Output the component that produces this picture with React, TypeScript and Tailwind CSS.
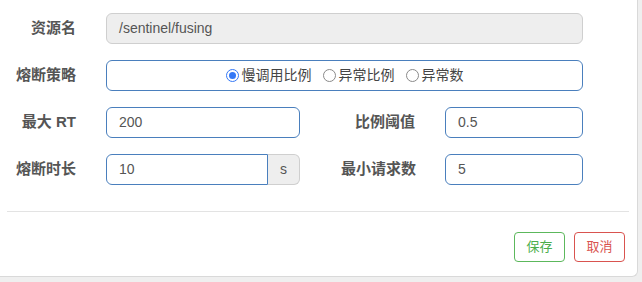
import React from "react"

const font = { fontFamily: '"Liberation Sans", "Noto Sans CJK SC", sans-serif' }

function Label({ children, className = "" }: { children: React.ReactNode; className?: string }) {
    return (
        <label className={`text-right text-[15px] font-bold text-[#555] ${className}`}>{children}</label>
    )
}

function Radio({ checked, label }: { checked?: boolean; label: string }) {
    return (
        <span className="flex items-center gap-[3px]">
            {checked ? (
                <span className="flex h-[13px] w-[13px] items-center justify-center rounded-full border border-[#3478f6] bg-white">
                    <span className="h-[7px] w-[7px] rounded-full bg-[#3478f6]" />
                </span>
            ) : (
                <span className="h-[13px] w-[13px] rounded-full border border-[#8a8a8a] bg-white" />
            )}
            <span className="text-[14px] text-[#444]">{label}</span>
        </span>
    )
}

export default function App() {
    return (
        <div className="h-[282px] w-[642px] bg-[#efefef]" style={font}>
            <div className="h-[277px] w-[638px] rounded-br-[6px] border-r border-b border-[#d9d9d9] bg-white">
                <div className="flex flex-col gap-[16px] pt-[13px]">
                    <div className="flex items-center">
                        <Label className="w-[76px]">资源名</Label>
                        <div className="ml-[30px] flex h-[31px] w-[477px] items-center rounded-[6px] border border-[#cfcfcf] bg-[#eeeeee] px-[12px] text-[14px] text-[#555]">
                            /sentinel/fusing
                        </div>
                    </div>
                    <div className="flex items-center">
                        <Label className="w-[76px]">熔断策略</Label>
                        <div className="ml-[30px] flex h-[31px] w-[477px] items-center justify-center gap-[11px] rounded-[6px] border border-[#4a7fbd] bg-white">
                            <Radio checked label="慢调用比例" />
                            <Radio label="异常比例" />
                            <Radio label="异常数" />
                        </div>
                    </div>
                    <div className="flex items-center">
                        <Label className="w-[76px]">最大 RT</Label>
                        <div className="ml-[30px] flex h-[31px] w-[194px] items-center rounded-[6px] border border-[#4a7fbd] px-[12px] text-[14px] text-[#555]">
                            200
                        </div>
                        <Label className="w-[115px]">比例阈值</Label>
                        <div className="ml-[30px] flex h-[31px] w-[138px] items-center rounded-[6px] border border-[#4a7fbd] px-[12px] text-[14px] text-[#555]">
                            0.5
                        </div>
                    </div>
                    <div className="flex items-center">
                        <Label className="w-[76px]">熔断时长</Label>
                        <div className="ml-[30px] flex h-[31px] w-[194px]">
                            <div className="flex flex-1 items-center rounded-l-[6px] border border-[#4a7fbd] px-[12px] text-[14px] text-[#555]">
                                10
                            </div>
                            <div className="flex w-[32px] items-center justify-center rounded-r-[6px] border border-l-0 border-[#cfcfcf] bg-[#eeeeee] text-[14px] text-[#555]">
                                s
                            </div>
                        </div>
                        <Label className="w-[116px]">最小请求数</Label>
                        <div className="ml-[29px] flex h-[31px] w-[138px] items-center rounded-[6px] border border-[#4a7fbd] px-[12px] text-[14px] text-[#555]">
                            5
                        </div>
                    </div>
                </div>
                <div className="mx-[7px] mt-[26px] h-px w-[622px] bg-[#e3e3e3]" />
                <div className="mt-[20px] flex justify-end gap-[9px] pr-[12px]">
                    <button className="h-[30px] w-[51px] rounded-[4px] border border-[#5cb85c] bg-white text-[13px] text-[#4cae4c]">
                        保存
                    </button>
                    <button className="h-[30px] w-[51px] rounded-[4px] border border-[#d9534f] bg-white text-[13px] text-[#d9534f]">
                        取消
                    </button>
                </div>
            </div>
        </div>
    )
}
